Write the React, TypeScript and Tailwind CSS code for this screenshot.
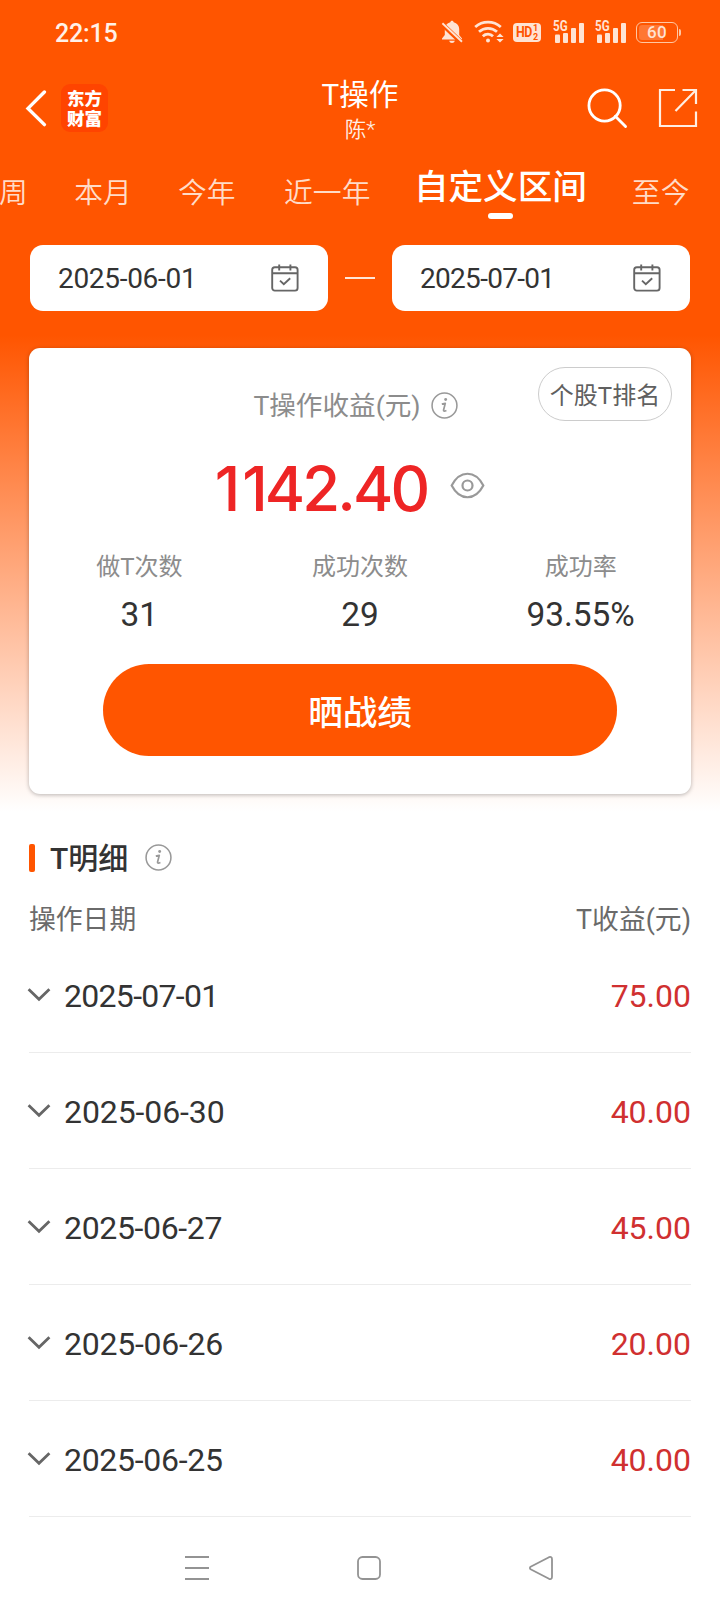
import React from 'react';

const tabs = [
  { name: '周', gap: '' },
  { name: '本月', gap: 'ml-[46.5px]' },
  { name: '今年', gap: 'ml-[46px]' },
  { name: '近一年', gap: 'ml-[48.5px]' },
  { name: '自定义区间', gap: 'ml-[43.5px]', active: true },
  { name: '至今', gap: 'ml-[45px]' },
];

const stats = [
  { label: '做T次数', value: '31' },
  { label: '成功次数', value: '29' },
  { label: '成功率', value: '93.55%' },
];

const details = [
  { date: '2025-07-01', profit: '75.00', tracking: 'tracking-[-0.7px]' },
  { date: '2025-06-30', profit: '40.00', tracking: 'tracking-[-0.1px]' },
  { date: '2025-06-27', profit: '45.00', tracking: 'tracking-[-0.35px]' },
  { date: '2025-06-26', profit: '20.00', tracking: 'tracking-[-0.25px]' },
  { date: '2025-06-25', profit: '40.00', tracking: 'tracking-[-0.3px]' },
];

const InfoIcon: React.FC = () => (
  <svg width="27" height="27" viewBox="0 0 28 28" fill="none" className="shrink-0">
    <circle cx="14" cy="14" r="12.9" stroke="#999" strokeWidth="1.6" />
    <circle cx="15.2" cy="7.8" r="1.5" fill="#999" />
    <path d="M11.2 12.6 L14.8 11.8 L13 18.8 Q12.8 20.6 16 19.2" stroke="#999" strokeWidth="1.8" strokeLinejoin="round" />
  </svg>
);

const CalendarIcon: React.FC = () => (
  <svg width="28" height="28" viewBox="0 0 28 28" fill="none" stroke="#666" strokeWidth="1.9">
    <rect x="1.2" y="3.2" width="25.4" height="23.4" rx="2.6" />
    <path d="M1 9.2 H27 M8.2 0.4 V6.6 M19.4 0.4 V6.6" />
    <path d="M9 16.6 L12.8 20.2 L19.2 14.2" />
  </svg>
);

const SignalIcon: React.FC = () => (
  <div className="relative h-[22px] w-[32px]">
    <span className="absolute -top-[1px] left-0 origin-left scale-x-80 text-[14.5px] leading-[13px] font-bold">5G</span>
    <svg width="32" height="22" viewBox="0 0 32 22" fill="currentColor">
      <rect x="2" y="13.5" width="5" height="8.5" rx="1" />
      <rect x="10" y="12" width="5" height="10" rx="1" />
      <rect x="18" y="7" width="5" height="15" rx="1" />
      <rect x="26" y="2" width="5" height="20" rx="1" />
    </svg>
  </div>
);

const StatusBar: React.FC = () => (
  <div className="flex h-16 items-center pr-[39px] pl-[55px] text-[#ffe3d3]">
    <span className="pt-[3px] text-[25px] leading-8 font-medium tracking-[-0.2px] text-[#fff1e8]">22:15</span>
    <div className="ml-auto flex items-center">
      <svg width="22" height="24" viewBox="0 0 22 24" fill="currentColor">
        <path d="M11 0.8 C11.9 0.8 12.6 1.4 12.7 2.3 C16 3.1 18.2 5.8 18.2 9.3 V15 L21 18.4 V19.4 H1 V18.4 L3.8 15 V9.3 C3.8 5.8 6 3.1 9.3 2.3 C9.4 1.4 10.1 0.8 11 0.8Z" />
        <path d="M8.2 20.8 H13.8 C13.4 22.3 12.4 23 11 23 C9.6 23 8.6 22.3 8.2 20.8Z" />
        <path d="M0 3 L20 22" stroke="#ff5500" strokeWidth="4.6" />
        <path d="M1.4 3.2 L21 21.8" stroke="currentColor" strokeWidth="1.9" />
      </svg>
      <svg width="30" height="24" viewBox="0 0 30 24" fill="none" stroke="currentColor" className="ml-[11px]">
        <path d="M1.2 7 C8.5 0.6 19.5 0.6 26.8 7" strokeWidth="2.8" />
        <path d="M5 11.8 C10.2 7.2 17.8 7.2 23 11.8" strokeWidth="2.8" />
        <path d="M8.8 16.2 C11.8 13.4 16.2 13.4 19 16.2" strokeWidth="2.8" />
        <circle cx="14" cy="20.4" r="2" fill="currentColor" stroke="none" />
        <path d="M26 13.4 L29.6 17 H22.4Z M26 22.6 L29.6 19 H22.4Z" fill="currentColor" stroke="none" />
      </svg>
      <div className="relative ml-[9px] h-[19px] w-[28px] rounded-[4px] bg-[#ffe3d3] text-[#ff5500]">
        <span className="absolute top-0 left-[3px] origin-left scale-x-80 text-[15.5px] leading-[19px] font-bold tracking-[-0.5px]">HD</span>
        <span className="absolute top-[1px] right-[2px] w-[6px] text-[9px] leading-[9px] font-bold">1<br />2</span>
      </div>
      <div className="ml-[12px]"><SignalIcon /></div>
      <div className="ml-[10px]"><SignalIcon /></div>
      <div className="relative ml-[9px] h-[21px] w-[42px] rounded-[6px] border-[1.5px] border-[#ffc7a3] p-[2px]">
        <div className="h-full w-[24px] rounded-l-[3px] bg-[#ff7733]" />
        <span className="absolute inset-0 text-center text-[17px] leading-[19px] font-medium tracking-[0.3px]">60</span>
      </div>
      <div className="ml-[1px] h-[7px] w-[2px] rounded-r-sm bg-[#ffc7a3]" />
    </div>
  </div>
);

const Header: React.FC = () => (
  <div className="flex h-[88px] items-center px-[22px] text-white">
    <div className="flex w-[200px] items-center">
      <svg width="26" height="38" viewBox="0 0 26 38" fill="none" stroke="#fff" strokeWidth="3.4">
        <path d="M22.4 3 L6 19.4 L22.4 35.6" strokeLinecap="round" />
      </svg>
      <div className="ml-[13px] h-[48px] w-[47px] rounded-[9px] bg-[#ff4400] pt-[5px] text-center text-[17.5px] font-black">
        <div className="leading-[20px]">东方</div>
        <div className="leading-[20px]">财富</div>
      </div>
    </div>
    <div className="flex-1 pt-[5px] text-center">
      <div className="text-[29.6px] leading-[38px]">T操作</div>
      <div className="text-[21.5px] leading-[31px] font-[350] text-[#fff0e6]">陈*</div>
    </div>
    <div className="flex w-[200px] items-center justify-end">
      <svg width="41" height="41" viewBox="0 0 42 42" fill="none" stroke="#fff" strokeWidth="2.9">
        <circle cx="18" cy="18" r="16" />
        <path d="M29 29 L39.5 39.5" strokeLinecap="round" />
      </svg>
      <svg width="40" height="40" viewBox="0 0 40 40" fill="none" stroke="#ffeee2" strokeWidth="2.2" className="ml-[30px]">
        <path d="M17 2 H2 V38 H38 V23.5 M24.5 2 H38 V16 M38 2 L17.5 23" />
      </svg>
    </div>
  </div>
);

const Tabs: React.FC = () => (
  <div className="-ml-[1px] flex h-[78px] items-start whitespace-nowrap text-[#ffdcc8]">
    {tabs.map((tab) =>
      tab.active ? (
        <div key={tab.name} className={`flex flex-col items-center ${tab.gap}`}>
          <span className="h-[61px] pt-[15px] text-[34.6px] leading-[40px] font-medium text-white">{tab.name}</span>
          <span className="h-[6px] w-[25px] rounded-[3px] bg-white" />
        </div>
      ) : (
        <span key={tab.name} className={`pt-[21px] text-[28.8px] leading-[40px] font-[350] ${tab.gap}`}>{tab.name}</span>
      )
    )}
  </div>
);

const DateField: React.FC<{ value: string; tracking: string }> = ({ value, tracking }) => (
  <div className="flex h-[66px] w-[298px] items-center justify-between rounded-[13px] bg-white pr-[29px] pl-[28px] text-[28px] text-[#333]">
    <span className={`pt-[2px] leading-8 ${tracking}`}>{value}</span>
    <CalendarIcon />
  </div>
);

const ProfitCard: React.FC = () => (
  <section className="relative mx-[29px] mt-[37px] flex h-[446px] flex-col items-center rounded-[11px] bg-white shadow-[0_1px_4px_rgba(0,0,0,0.28)]">
    <button className="absolute top-[19px] right-[19px] h-[54px] w-[134px] rounded-full border border-[#ccc] pt-[4px] text-[24px] leading-[48px] whitespace-nowrap text-[#606060]">
      个股T排名
    </button>
    <div className="mt-[37px] -ml-[9px] flex h-[40px] items-center gap-[10px] text-[26.6px] whitespace-nowrap text-[#8c8c8c]">
      <span className="pt-[2px]">T操作收益(元)</span>
      <InfoIcon />
    </div>
    <div className="mt-[26px] -ml-[20px] flex h-[70px] items-center">
      <span className="pt-[5px] font-['Inter'] text-[61.5px] leading-[70px] font-medium tracking-[-2.9px] text-[#ee2525]">
        <span className="tracking-[2px]">1</span>142.40
      </span>
      <svg width="35" height="27" viewBox="0 0 36 28" fill="none" stroke="#999" strokeWidth="2.3" className="-mt-[2px] ml-[23px]">
        <path d="M1.6 14 C6 5.5 11.5 1.8 18 1.8 C24.5 1.8 30 5.5 34.4 14 C30 22.5 24.5 26.2 18 26.2 C11.5 26.2 6 22.5 1.6 14Z" />
        <circle cx="18" cy="14" r="5.2" />
      </svg>
    </div>
    <div className="mt-[26px] grid w-full grid-cols-3 text-center">
      {stats.map((s) => (
        <div key={s.label}>
          <div className="text-[24px] leading-[40px] text-[#8c8c8c]">{s.label}</div>
          <div className="mt-[8px] text-[33.4px] leading-[40px] font-[450] text-[#333]">{s.value}</div>
        </div>
      ))}
    </div>
    <button className="mt-[29px] h-[92px] w-[514px] rounded-full bg-[#ff5500] pt-[6px] text-[34.6px] leading-[40px] font-medium text-white">
      晒战绩
    </button>
  </section>
);

const DetailList: React.FC = () => (
  <section className="px-[29px] pt-[23px]">
    <div className="flex h-[40px] items-center">
      <span className="h-[28px] w-[6px] rounded-[2px] bg-[#ff5500]" />
      <h2 className="ml-[15px] pt-[2px] text-[30px] leading-[40px] font-medium text-[#333]">T明细</h2>
      <span className="-mt-[1px] ml-[17px]"><InfoIcon /></span>
    </div>
    <div className="mt-[22px] flex h-[40px] items-center justify-between text-[26.8px] text-[#6a6a6a]">
      <span>操作日期</span>
      <span>T收益(元)</span>
    </div>
    <ul className="-mt-[3px]">
      {details.map((d) => (
        <li key={d.date} className="flex h-[116px] items-center border-b border-[#ececec] text-[32px] leading-[40px]">
          <svg width="24" height="16" viewBox="0 0 24 16" fill="none" stroke="#666" strokeWidth="2.8" className="mt-[1px] -ml-[2px]">
            <path d="M1.6 2.2 L12 12.2 L22.4 2.2" />
          </svg>
          <span className={`ml-[13px] pt-[2px] text-[#333] ${d.tracking}`}>{d.date}</span>
          <span className="ml-auto pt-[2px] text-[#d03030]">{d.profit}</span>
        </li>
      ))}
    </ul>
  </section>
);

const NavBar: React.FC = () => (
  <nav className="flex items-center justify-center gap-[146px] pt-[38px] pl-[18px]">
    <svg width="26" height="26" viewBox="0 0 26 26" stroke="#939393" strokeWidth="2">
      <path d="M1 2 H25 M1 13 H25 M1 24 H25" />
    </svg>
    <svg width="26" height="26" viewBox="0 0 26 26" fill="none" stroke="#939393" strokeWidth="1.8">
      <rect x="2" y="2" width="22" height="22" rx="4.5" />
    </svg>
    <svg width="26" height="26" viewBox="0 0 26 26" fill="none" stroke="#939393" strokeWidth="1.8" strokeLinejoin="round">
      <path d="M2.6 11.7 L21 2.2 Q24 1.2 24 4.2 V21.8 Q24 24.8 21 23.8 L2.6 14.3 Q1.2 13 2.6 11.7Z" />
    </svg>
  </nav>
);

const App: React.FC = () => {
  return (
    <div className="h-[1612px] w-[720px] overflow-hidden bg-white font-['Roboto','Noto_Sans_CJK_SC',sans-serif]">
      <div className="h-[815px] bg-[linear-gradient(to_bottom,#ff5500_335px,#ffffff_812px)]">
        <StatusBar />
        <Header />
        <Tabs />
        <div className="mx-[30px] mt-[15px] flex items-center justify-between">
          <DateField value="2025-06-01" tracking="tracking-[-0.3px]" />
          <span className="h-[2px] w-[30px] bg-[#ffe6d8]" />
          <DateField value="2025-07-01" tracking="tracking-[-0.7px]" />
        </div>
        <ProfitCard />
      </div>
      <DetailList />
      <NavBar />
    </div>
  );
};

export default App;
